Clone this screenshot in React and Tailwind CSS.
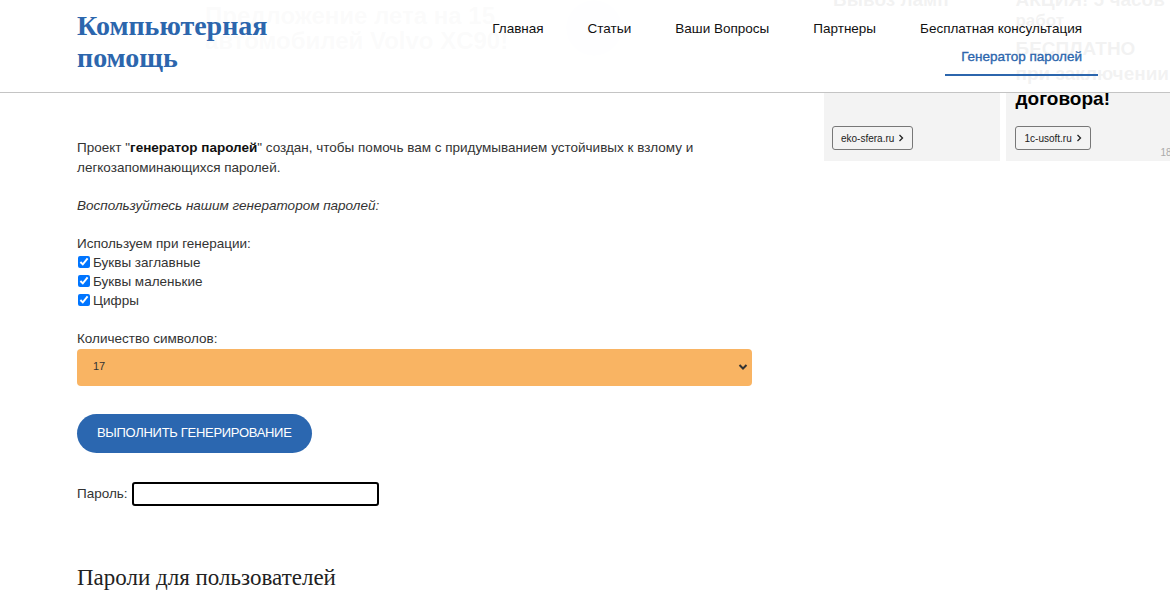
import React from "react";

export default function App() {
  const sans = { fontFamily: '"Liberation Sans", Arial, sans-serif' };
  return (
    <div className="relative w-[1170px] h-[596px] overflow-hidden bg-white" style={sans}>
      {/* fixed header overlay */}
      <header className="absolute top-0 left-0 right-0 h-[93px] bg-white/95 border-b border-[#c4c4c4] z-10 flex">
        <div className="pl-[77px] pt-[10px] w-[400px]">
          <div
            className="text-[#2c66ad] font-bold text-[28px] leading-[32px]"
            style={{ fontFamily: '"Liberation Serif", "DejaVu Serif", serif' }}
          >
            Компьютерная
            <br />
            помощь
          </div>
        </div>
        <nav className="ml-auto pr-[72px] flex flex-col items-end text-[13.5px] text-[#111]">
          <div className="flex gap-[44px] pt-[19px] pr-[16px] leading-[20px]">
            <span>Главная</span>
            <span>Статьи</span>
            <span>Ваши Вопросы</span>
            <span>Партнеры</span>
            <span>Бесплатная консультация</span>
          </div>
          <div className="mt-[8px] px-[16px] pb-[7px] border-b-2 border-[#2c66ad] text-[#2c66ad] leading-[20px] text-[13.5px] [-webkit-text-stroke:0.35px_#2c66ad]">
            Генератор паролей
          </div>
        </nav>
      </header>

      <div className="flex">
        {/* left column */}
        <div className="w-[824px]">
          {/* top ad */}
          <div className="ml-[183px] w-[462px] h-[80px] bg-[#f6f6f7] px-[7px] -mt-[10px]">
            <div className="h-[82px] bg-white rounded-b-[12px] flex items-start pl-[15px] pt-[13px]">
              <div className="font-bold text-[24px] leading-[25px] text-[#a8a8a8] w-[340px]">
                Предложение лета на 15 автомобилей Volvo XC90!
              </div>
              <div className="ml-auto mr-[16px] mt-[-3px] w-[56px] h-[56px] rounded-full bg-[#e6ecf5] flex items-center justify-center text-[#2c66ad] text-[24px]">
                →
              </div>
            </div>
          </div>

          {/* content */}
          <div className="pl-[77px] pt-[68px] text-[13.5px] leading-[19.5px] text-[#333]">
            <p className="w-[660px]">
              Проект "<b className="text-[#111]">генератор паролей</b>" создан, чтобы помочь вам с придумыванием устойчивых к взлому и легкозапоминающихся паролей.
            </p>
            <p className="mt-[19px] italic">Воспользуйтесь нашим генератором паролей:</p>
            <p className="mt-[18px] leading-[19px]">Используем при генерации:</p>
            {["Буквы заглавные", "Буквы маленькие", "Цифры"].map((t) => (
              <label key={t} className="flex items-center leading-[19px]">
                <input type="checkbox" defaultChecked className="w-[12px] h-[12px] ml-[1px] mr-[3px] accent-[#0075ff]" />
                <span>{t}</span>
              </label>
            ))}
            <p className="mt-[19px] leading-[19px]">Количество символов:</p>
            <div className="mt-[1px] w-[675px] h-[37px] bg-[#f9b463] rounded-[4px] flex items-center pl-[16px] pr-[4px] text-[11px] text-[#333]">
              <span>17</span>
              <svg className="ml-auto" width="10" height="8" viewBox="0 0 10 8">
                <path d="M1.5 2 L5 5.5 L8.5 2" stroke="#333" strokeWidth="2" fill="none" />
              </svg>
            </div>
            <button className="mt-[28px] h-[39px] px-[20px] rounded-full bg-[#2b67b0] text-white text-[13px] tracking-[-0.3px] uppercase">
              Выполнить генерирование
            </button>
            <div className="mt-[29px] flex items-center">
              <span className="mr-[4px]">Пароль:</span>
              <div className="w-[247px] h-[24px] border-2 border-black rounded-[3px] bg-white" />
            </div>
            <h2
              className="mt-[59px] text-[23px] leading-[26px] text-[#222] font-normal"
              style={{ fontFamily: '"Liberation Serif", "DejaVu Serif", serif' }}
            >
              Пароли для пользователей
            </h2>
          </div>
        </div>

        {/* right ads */}
        <div className="w-[346px] flex gap-[6px]">
          <div className="relative w-[177px] h-[161px] bg-[#f3f3f3] flex flex-col">
            <div className="pl-[9px] -mt-[12px] font-bold text-[19px] leading-[24px] text-black">Вывоз ламп</div>
            <div className="mt-auto mb-[11px] ml-[8px] self-start h-[24px] px-[8px] border border-[#777] rounded-[3px] flex items-center text-[10px] text-[#222] gap-[4px]">
              eko-sfera.ru
              <svg width="6" height="8" viewBox="0 0 6 8"><path d="M1.5 1 L4.5 4 L1.5 7" stroke="#222" strokeWidth="1.3" fill="none" /></svg>
            </div>
          </div>
          <div className="relative w-[164px] h-[161px] bg-[#f3f3f3] flex flex-col">
            <div className="pl-[9px] -mt-[13px] font-bold text-[19px] leading-[25px] text-black">
              АКЦИЯ! 5 часов
              <div className="text-[17px] leading-[18px] font-bold">работ</div>
              <div className="mt-[6px]">БЕСПЛАТНО при заключении договора!</div>
            </div>
            <div className="mt-auto mb-[11px] ml-[9px] self-start h-[24px] px-[8px] border border-[#777] rounded-[3px] flex items-center text-[10px] text-[#222] gap-[4px]">
              1c-usoft.ru
              <svg width="6" height="8" viewBox="0 0 6 8"><path d="M1.5 1 L4.5 4 L1.5 7" stroke="#222" strokeWidth="1.3" fill="none" /></svg>
            </div>
            <span className="absolute left-[154px] bottom-[1px] text-[10px] text-[#aaa] whitespace-nowrap">18+</span>
          </div>
        </div>
      </div>
    </div>
  );
}
